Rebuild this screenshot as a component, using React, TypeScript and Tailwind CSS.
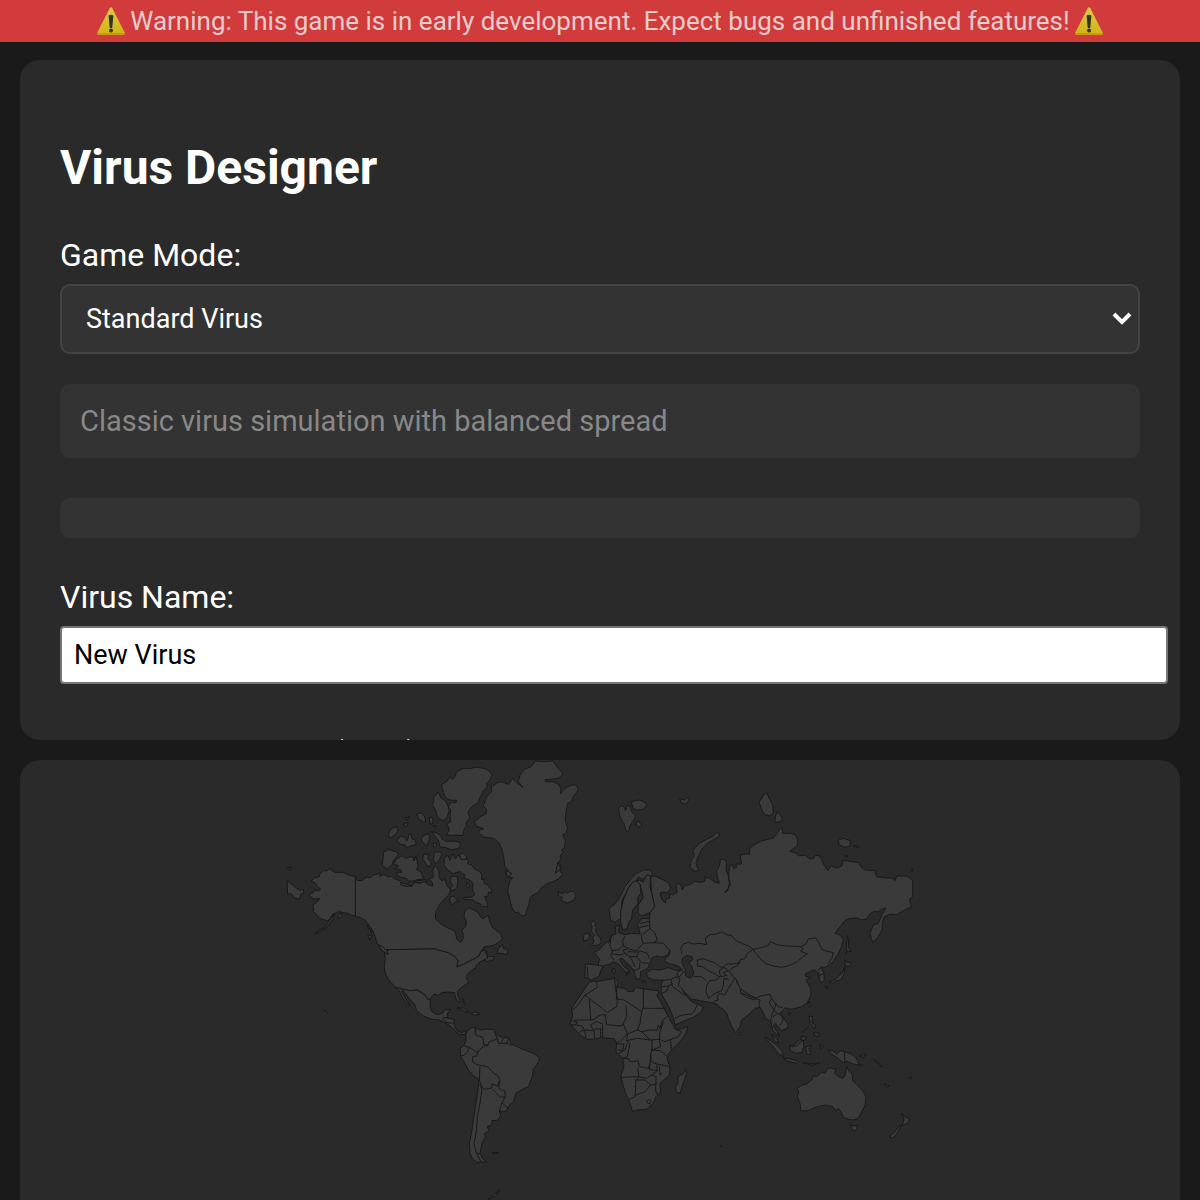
import { useState } from "react";

type Layer = { x: number; y: number; land: string[]; lines?: string[] };

/* Each layer covers one part of the world, drawn at three units per map unit. */
const layers: Layer[] = [
  {
    // Alaska, Canada and the Arctic islands
    x: 260,
    y: -5,
    land: [
      "M226,365 205,360 190,352 165,352 148,341 140,348 130,346 118,358 118,366 105,368 93,378 108,386 112,395 122,402 116,407 105,405 100,413 88,416 90,426 105,433 120,430 108,444 98,450 102,462 98,470 112,480 118,490 130,493 140,498 150,492 158,478 170,472 180,470 190,473 205,475 215,482 226,482Z",
      "M163,476 158,494 148,508 136,520 120,530 104,538 114,528 132,518 142,506 150,494Z",
      "M174,484 180,476 187,474 184,484 176,490Z",
      "M22,376 35,388 48,398 60,405 70,404 72,414 62,418 60,430 52,432 40,425 32,415 24,418Z",
      "M24,338 34,336 32,344 26,344Z",
      "M226,365 232,376 246,377 255,369 262,366 272,368 280,360 292,358 297,352 300,364 312,358 325,366 335,364 345,372 362,378 366,388 385,390 396,393 405,382 420,385 432,378 444,388 458,394 456,380 446,374 460,366 458,345 466,331 476,345 478,368 486,378 494,370 500,390 512,405 506,420 490,435 480,448 468,470 466,490 480,505 495,515 512,522 526,530 530,552 541,563 549,553 550,538 545,526 557,515 559,500 552,484 555,466 568,458 578,464 592,470 600,482 608,492 615,486 625,482 630,500 635,515 650,528 662,536 668,552 656,562 645,570 625,574 612,576 603,590 595,605 575,615 550,628 530,636 534,618 525,605 505,593 485,588 465,582 450,582 323,584 318,586 305,578 292,567 285,545 278,525 268,512 255,495 240,488 226,482",
      "M525,65 530,50 550,40 570,41 590,36 620,42 636,58 632,72 620,86 622,96 610,108 605,120 598,130 596,142 580,152 568,164 564,172 570,188 558,204 560,214 553,220 548,242 525,240 512,242 498,237 508,228 505,216 500,208 512,200 510,186 512,165 504,154 515,142 528,143 530,136 515,136 498,130 490,112 484,90 500,80 510,66 518,72Z",
      "M475,112 462,126 460,142 457,152 468,166 470,180 478,192 492,196 500,188 508,166 503,150 496,138 484,130Z",
      "M410,176 422,174 432,180 438,198 430,202 416,190Z",
      "M448,188 456,186 460,204 452,208Z",
      "M376,188 388,186 382,194Z M372,206 384,202 383,212 374,214Z M460,212 468,212 466,216Z",
      "M340,218 354,216 354,228 345,240 330,250 325,238 330,228Z",
      "M353,252 362,243 374,247 380,258 384,250 386,238 394,238 397,252 407,256 408,270 392,272 382,278 376,270 362,268 352,260Z",
      "M430,242 444,236 450,244 446,260 440,272 428,262 424,252Z",
      "M456,230 470,234 482,240 486,252 500,260 520,258 536,260 542,270 536,280 515,284 495,278 480,275 476,258 465,244Z M462,264 470,266 468,277 460,274Z",
      "M312,290 325,284 348,290 356,298 345,312 338,320 336,332 322,342 306,330 309,312Z",
      "M342,325 350,312 360,306 366,302 376,310 390,306 400,306 402,318 408,303 412,320 414,334 410,344 424,352 428,364 432,372 412,374 400,378 386,378 378,370 360,366 352,360 350,352 366,352 362,344 345,342 355,334Z",
      "M432,298 446,298 444,312 454,322 452,333 442,334 436,324 428,312Z",
      "M464,292 478,290 487,296 480,310 470,326 460,318 462,304Z",
      "M494,308 504,300 510,316 514,306 520,296 526,312 534,300 545,312 558,310 566,318 562,326 575,330 584,342 600,350 606,360 604,374 612,372 612,384 622,390 635,404 636,412 625,412 624,424 614,424 620,440 624,456 608,454 600,445 590,444 578,434 552,434 552,428 576,426 584,418 576,400 580,386 570,376 552,368 555,360 540,350 518,356 502,344 492,330Z",
      "M538,298 550,294 560,304 558,314 544,314Z",
      "M514,364 532,364 534,380 530,400 518,407 510,400 518,392 512,380Z",
      "M562,382 568,390 566,400 560,394Z M512,424 522,424 536,440 526,440 516,452 510,438Z",
      "M362,384 382,388 395,393 380,394 366,391Z M400,382 424,382 442,378 438,374 408,378Z",
      "M262,512 272,524 275,535 268,524Z M264,540 276,542 270,554Z M296,570 308,575 323,590 322,597 308,588Z",
      "M604,590 612,584 620,590 620,602 632,605 644,604 640,614 622,620 610,614 604,602Z M655,580 668,568 670,580 684,586 680,600 662,594 653,596Z",
    ],
    lines: ["M226,365 226,482"],
  },
  {
    // Greenland, Iceland, Svalbard and the British Isles
    x: 410,
    y: -5,
    land: [
      "M278,96 265,80 270,60 285,42 305,34 315,18 345,20 370,18 378,32 398,55 390,68 370,72 346,74 346,80 370,80 388,90 392,102 392,116 405,100 425,90 438,90 445,100 440,112 430,124 424,140 412,146 408,175 406,195 412,218 410,232 398,240 406,255 404,278 395,284 400,292 390,302 394,312 386,320 394,335 390,350 398,358 388,370 370,380 350,386 335,398 325,412 305,422 298,435 297,448 290,466 286,482 274,482 265,472 254,472 246,458 240,435 233,408 236,392 240,378 248,368 232,366 228,354 236,346 224,334 222,310 215,280 206,262 190,250 160,246 145,232 150,224 162,221 140,214 132,202 150,186 168,176 170,164 160,152 170,125 184,110 184,96 200,84 215,80 235,88 248,70 262,84Z",
      "M228,346 246,356 232,366Z M384,322 392,340 376,356 380,340Z",
      "M386,410 398,416 402,410 412,414 424,408 434,412 438,424 430,436 412,444 392,436 398,428 386,422Z",
      "M567,158 576,152 584,158 586,168 592,152 600,152 606,172 617,182 610,198 600,212 596,230 588,228 582,206 572,190 568,178Z",
      "M604,140 618,136 630,135 645,142 651,150 640,162 622,166 610,160Z M620,198 630,202 636,210 628,216 620,212Z",
      "M482,502 490,498 498,504 494,512 500,518 496,526 502,540 510,548 514,560 506,570 490,572 485,570 492,560 488,548 494,540 484,530 486,516Z",
      "M462,540 468,534 478,536 478,548 472,556 462,558Z",
    ],
  },
  {
    // Europe and Asia
    x: 540,
    y: 20,
    land: [
      "M272,290 285,288 310,300 325,308 333,324 322,338 308,336 300,340 306,360 316,369 318,358 330,354 328,342 340,345 352,336 348,316 356,310 366,320 366,330 376,316 392,313 405,303 415,307 435,304 436,290 450,296 468,308 478,310 472,290 470,272 478,258 482,237 496,240 500,250 498,270 506,290 511,315 495,338 503,332 508,310 506,290 508,262 516,252 522,266 530,262 528,252 545,252 541,226 555,222 568,222 570,204 580,196 600,184 625,178 640,174 655,154 663,142 668,150 668,160 690,160 705,164 714,180 712,196 700,206 690,214 710,220 715,228 735,225 748,236 760,237 765,226 780,228 786,240 792,255 803,272 812,258 830,264 845,258 850,240 870,244 895,248 905,262 915,270 945,272 950,290 975,294 995,294 1005,302 1010,288 1040,288 1058,300 1058,350 1048,358 1054,380 1030,392 1010,405 990,402 972,412 967,430 966,450 955,470 940,488 934,478 930,460 940,435 955,430 965,405 978,384 965,388 955,395 940,395 930,402 920,417 905,420 890,414 870,415 855,422 840,440 825,460 840,465 850,478 845,500 835,520 820,545 800,560 784,563 792,580 793,600 785,610 778,598 777,582 768,572 760,570 735,582 738,590 752,592 738,600 752,625 753,645 742,668 725,680 705,686 690,688 675,683 668,692 660,700 672,715 685,735 682,745 665,752 655,742 645,730 640,738 652,755 658,770 648,762 638,750 632,722 618,718 610,698 600,682 585,685 565,705 545,720 540,740 527,758 515,740 505,715 500,700 490,688 478,682 470,672 450,667 435,665 410,660 396,658 380,642 368,632 380,650 395,665 412,672 430,680 424,696 400,712 375,722 345,735 342,720 330,688 316,662 303,640 305,610 308,600 280,600 262,592 260,578 275,568 300,570 325,563 350,572 362,570 345,555 325,550 312,542 328,525 330,510 322,525 305,532 290,528 275,535 268,555 262,566 242,575 240,598 228,596 222,572 205,552 186,535 178,538 192,560 210,572 198,578 175,552 160,546 150,552 130,558 122,572 118,588 95,600 75,592 76,552 115,555 118,536 102,517 120,508 132,492 150,480 156,466 168,462 166,440 178,435 176,458 195,464 215,460 240,462 236,442 232,432 246,415 268,416 270,398 284,380 275,340 272,290",
      "M148,385 165,372 180,350 195,320 212,298 228,282 250,270 270,270 278,280 272,290 262,285 250,298 235,292 228,303 215,310 205,325 195,345 185,365 184,400 182,416 165,427 152,420Z",
      "M228,303 240,310 243,340 232,355 235,370 218,390 215,415 205,430 202,445 188,450 182,426 182,395 190,360 205,325 215,310Z",
      "M272,290 270,318 275,340 284,380 270,398 245,407 234,400 235,375 250,352 245,330 240,312 228,303 238,300 250,306 260,286Z",
      "M400,210 420,188 440,178 460,168 468,158 480,160 474,172 455,182 440,192 425,208 415,228 408,248 412,262 417,270 405,274 390,262 394,240 402,228Z",
      "M360,56 374,60 384,52 388,60 376,72 366,70Z",
      "M598,66 612,44 620,38 628,56 638,74 640,100 628,108 612,102 604,86Z M652,96 666,112 664,124 644,128 646,112Z",
      "M836,180 850,175 872,182 870,198 852,202 838,194Z M880,196 898,200 888,202Z M854,226 864,228 856,232Z M1052,268 1058,266 1056,274Z",
      "M862,468 866,480 865,500 874,516 862,512 858,520 860,490Z",
      "M854,540 860,546 876,548 868,560 858,558Z M854,562 852,584 842,600 828,602 818,610 806,606 826,598 836,588 844,582Z M796,618 804,620 802,626Z",
      "M198,580 206,578 200,586Z M158,566 166,568 164,582 158,578Z M245,604 258,604 256,608Z",
    ],
    lines: [
      "M365,520 362,505 370,492 385,487 400,492 420,490 440,494 436,474 450,464 470,462 486,455 498,464 514,466 528,482 545,490 565,498 578,508",
      "M578,508 595,505 622,498 632,485 650,494 680,498 722,500 730,506 722,514 742,522 728,530 712,545 690,556 665,562 640,558 620,552 600,535 588,520 578,508",
      "M722,500 738,492 745,476 768,474 778,490 785,508 802,514 820,518 815,535 805,550",
      "M578,508 562,520 555,535 540,540 535,555 515,565 508,575 520,590 530,600 532,612",
      "M540,548 520,552 500,552 490,562 478,560 465,548 445,542 430,536 412,540 412,558 428,560 445,572 465,582 478,590",
      "M478,590 470,600 448,602 440,618 438,636 446,655 465,640 485,632 490,615 492,595 505,598",
      "M478,572 492,562 505,572 490,578 500,586 484,590Z",
      "M402,590 425,590 438,602",
      "M526,594 514,612 505,625 495,645 478,640 472,652 474,660 460,665",
      "M530,600 540,625 560,640 580,650 590,655 600,648 618,645 630,642 634,655 628,668 642,690 636,702 632,722",
      "M540,628 542,638 570,650 588,655 585,660 560,652 542,640",
      "M588,656 600,660 596,675 600,682 M634,655 648,672 655,680 668,682 M648,672 642,690 650,700 664,705 670,720 660,735 M650,702 640,710",
      "M784,560 775,572 M790,582 780,585",
      "M268,425 240,430 M266,436 240,442 M268,416 270,445 285,458 292,482 280,488 250,490 245,478 244,462 M250,490 240,500 230,512 210,508 190,498 188,482 194,470 M280,488 310,490 328,510 M270,445 250,462",
      "M152,475 150,500 158,512 152,528 162,540 M158,522 180,525 195,520 188,510 200,508 M195,520 210,530 230,530 238,512 262,520 268,535 M205,515 232,516 M230,530 245,548 266,550 M210,530 218,545 225,560 M240,548 238,566 222,572 M155,466 145,490 M188,498 176,510 156,512 M194,548 204,560",
      "M82,560 84,592 M115,556 130,558 M345,555 360,562 372,578 M362,570 350,580 356,592 372,576",
      "M306,602 332,598 350,590 360,598 355,615 372,632 M332,598 338,620 350,628 372,645 M308,620 325,618 338,612 M306,640 320,634 325,618 M345,715 362,706 395,702 405,690 412,674",
    ],
  },
  {
    // United States, Mexico and South America
    x: 340,
    y: 170,
    land: [
      "M83,59 210,57 225,57 245,63 265,68 285,80 294,93 290,111 310,103 335,90 355,80 363,65 372,60 380,72 383,85 366,92 350,104 348,114 335,120 322,133 320,145 327,158 305,172 292,185 295,200 301,212 296,218 288,205 283,188 265,186 245,188 235,196 222,192 212,205 205,210 195,195 180,185 172,180 150,182 130,178 108,172 90,155 76,132 73,110 76,85 72,66 83,74Z",
      "M108,172 130,178 150,182 172,180 180,185 195,195 205,210 212,205 210,228 215,245 232,254 248,250 252,240 272,238 262,252 262,264 282,268 284,290 292,302 305,308 316,302 318,312 300,314 285,302 275,292 258,280 240,270 215,268 190,258 170,242 165,225 148,206 130,182 124,184 138,206 150,226 140,220 126,200 118,184Z",
      "M292,234 310,234 328,246 318,246 300,238Z M334,250 346,246 360,252 345,256Z M308,206 316,216 314,222Z",
      "M318,330 318,310 330,295 343,292 348,304 345,292 360,300 380,298 400,298 405,308 416,318 430,322 446,324 455,342 475,352 500,362 520,370 538,382 536,396 520,418 517,440 505,470 480,482 468,490 460,515 445,530 438,545 418,543 422,556 415,570 396,572 396,585 382,590 388,602 374,610 376,622 366,640 360,670 368,686 380,696 350,697 338,688 330,670 328,640 336,600 340,570 346,530 354,480 357,447 340,438 325,420 312,395 302,380 300,355 310,348Z",
      "M385,808 392,800 404,792 420,780 408,796Z M398,668 416,668 408,672Z",
    ],
    lines: [
      "M345,304 348,316 368,322 372,345 384,345 388,334 400,332 412,325 404,308 M412,325 416,342 424,338 430,325 M424,340 440,340 446,324 M440,340 455,345 M384,345 370,350 355,364 350,378 338,380 338,395 350,404 362,406 382,410 400,428 416,440 420,455 415,468 395,462 396,474 375,478 366,472 358,450 360,410",
      "M314,348 328,352 325,362 312,376 304,378 M328,352 350,366 355,364 M415,455 418,476 435,484 436,500 422,502 410,490 400,480 M436,500 426,518 444,534 M426,518 418,543 M360,465 366,480 360,520 352,560 350,600 342,640 348,668 360,672 M350,670 362,694 M253,262 262,264 M248,264 260,278 M258,278 284,280",
    ],
  },
  {
    // Africa
    x: 530,
    y: 140,
    land: [
      "M120,245 150,243 195,235 205,245 200,262 225,265 232,274 250,275 255,262 280,267 325,272 326,282 320,285 340,320 355,350 372,380 380,390 414,380 408,400 390,425 370,445 355,462 352,480 360,500 358,525 330,550 332,575 318,590 310,610 290,628 262,630 248,635 240,610 225,575 212,530 222,500 218,475 198,455 200,430 192,415 175,415 155,412 135,417 110,418 90,405 72,385 60,370 68,350 65,325 85,295 105,265Z",
      "M408,508 410,520 400,550 390,580 378,575 376,560 384,550 384,530 398,522Z",
      "M568,396 574,402 570,408 566,402Z",
    ],
    lines: [
      "M140,245 142,262 122,275 105,285 80,320 64,330 M105,285 172,338 200,320 202,298 196,262 194,238 M118,298 122,360 74,360 M122,360 132,358 150,345 168,345 M200,262 200,298 M202,298 222,300 275,335 280,322 280,267 M280,325 342,325 M275,335 270,370 262,390 232,402 M228,318 230,350 220,370 215,378 170,374 165,345 M220,372 232,402 215,420 200,430 M262,390 275,395 300,390 322,390 325,375 330,385 338,360 352,350 M340,365 330,395 328,418 300,420 275,395 M328,418 345,425 385,410 395,395 372,385 M362,420 364,450 M328,420 332,440 306,450 306,422 M232,405 230,422 262,415 300,420 M232,430 225,450 208,460 M200,432 222,432 218,452 205,450 M230,422 240,430 232,470 218,475 M222,475 236,476 240,485 264,482 268,500 295,505 300,490 302,465 306,450 M306,450 332,452 352,470 M302,465 304,485 320,492 360,500 M300,490 298,508 322,512 320,495 M264,505 266,530 212,532 M266,530 290,535 305,525 322,512 M266,532 258,540 255,590 238,598 M258,540 285,540 302,555 318,552 318,530 305,525 M302,555 285,575 258,585 M318,552 316,570 322,585 M328,500 330,525 336,520 M298,598 304,604 298,612 290,606Z M64,362 82,366 76,375 66,374 M76,375 96,378 104,392 M88,398 96,390 104,395 108,415 M104,390 132,392 134,415 M128,388 122,375 140,364 158,372 158,410 M152,388 152,412 M132,388 152,386",
    ],
  },
  {
    // South-east Asia and Oceania
    x: 700,
    y: 160,
    land: [
      "M232,505 245,496 260,492 275,480 280,468 290,470 305,456 315,460 322,446 332,444 348,448 344,460 356,470 370,475 376,462 380,440 388,455 396,462 398,482 412,495 428,512 438,530 436,555 425,575 415,595 400,600 385,598 370,592 362,575 355,565 348,572 338,560 318,555 290,560 265,572 243,573 240,550 232,530 236,518Z",
      "M392,614 402,618 412,614 410,628 402,634 396,626Z",
      "M545,580 554,590 570,598 560,612 546,616 552,600Z M544,616 536,632 524,650 512,656 510,648 524,636 536,620Z",
      "M136,352 150,360 170,375 186,392 190,410 176,402 158,378 145,364Z",
      "M190,414 210,416 235,424 230,430 205,424Z",
      "M210,376 224,374 240,358 250,364 252,380 245,398 226,400 212,392Z M244,350 258,350 254,362 244,360Z",
      "M258,380 276,376 266,386 274,402 262,404Z M250,428 280,432 300,428 278,436Z",
      "M268,288 278,290 276,308 288,316 284,326 272,312Z M282,338 298,340 296,350 284,346Z M300,374 310,378 304,386Z",
      "M325,390 338,392 350,402 362,392 390,400 408,412 414,428 424,436 400,432 382,424 370,428 350,412 336,404Z",
      "M268,246 272,256 268,262 264,254Z M206,278 214,280 208,286Z M156,344 172,356 176,370 166,366Z",
      "M420,408 436,402 432,412Z M460,418 484,434 486,440Z M494,492 508,498 500,502Z M566,474 576,470 572,478Z",
    ],
    lines: ["M374,398 374,428 M212,380 230,378 246,362 M248,336 264,322 M0,678 6,678"],
  },
];

function WorldMap() {
  return (
    <svg
      role="img"
      aria-label="World map"
      viewBox="0 0 1160 440"
      className="block w-full"
      strokeLinejoin="round"
      strokeLinecap="round"
      stroke="#191919"
    >
      {layers.map((layer, i) => (
        <g key={i} transform={`translate(${layer.x} ${layer.y}) scale(0.33333)`} strokeWidth={3}>
          {layer.land.map((d, j) => (
            <path key={j} d={d} fill="#3a3a3a" />
          ))}
          {layer.lines?.map((d, j) => (
            <path key={j} d={d} fill="none" />
          ))}
        </g>
      ))}
      {/* Caspian Sea */}
      <path
        transform="translate(540 20) scale(0.33333)"
        d="M368,535 380,526 396,530 398,540 386,548 396,560 402,582 392,595 378,588 376,568 366,550Z"
        fill="#2a2a2a"
        strokeWidth={3}
      />
      <path d="M304,250l4,3" fill="none" />
    </svg>
  );
}

function WarningSign() {
  return (
    <svg viewBox="0 0 30 30" className="size-[30px] shrink-0" aria-hidden="true">
      <defs>
        <linearGradient id="sign" x1="0" y1="0" x2="0" y2="1">
          <stop offset="0" stopColor="#d9cc4a" />
          <stop offset="1" stopColor="#d3b312" />
        </linearGradient>
      </defs>
      <path d="M13.7 2.2q1.3-1.8 2.6 0L28.8 26.800q.6 2-1.200 2H2.400q-1.800 0-1.200-2Z" fill="url(#sign)" />
      <path d="M1.500 27.500h27" stroke="#bd9a20" strokeWidth="1" />
      <path d="M12.600 9.500q2.400-1.400 4.800 0L16.300 21.500q-1.300 1-2.600 0Z" fill="#33331f" />
      <circle cx="15" cy="24.600" r="2" fill="#33331f" />
    </svg>
  );
}

export default function App() {
  const [name, setName] = useState("New Virus");
  return (
    <div className="flex h-screen flex-col overflow-hidden bg-[#1a1a1a] font-['Roboto',sans-serif] text-white">
      <div
        role="alert"
        className="flex h-[42px] shrink-0 items-center justify-center gap-1 bg-[#d13b3b] text-[26px] leading-[30px] text-[#e6cccc]"
      >
        <WarningSign />
        <span>Warning: This game is in early development. Expect bugs and unfinished features!</span>
        <WarningSign />
      </div>
      <main className="flex min-h-0 flex-1 flex-col gap-5 px-5 pt-[18px]">
        <section className="max-h-[680px] shrink-0 overflow-y-auto rounded-[20px] bg-[#2a2a2a] px-10 pt-20 [scrollbar-width:none]">
          <h1 className="text-[48px] leading-[56px] font-bold">Virus Designer</h1>
          <label htmlFor="mode" className="mt-10 block text-[32px] leading-[38px]">
            Game Mode:
          </label>
          <div className="relative mt-[10px]">
            <select
              id="mode"
              className="block h-[70px] w-full appearance-none rounded-[10px] border-2 border-[#444] bg-[#333] px-6 text-[27px]"
            >
              <option>Standard Virus</option>
            </select>
            <svg
              viewBox="0 0 20 14"
              className="pointer-events-none absolute top-7 right-2 h-[14px] w-5"
              fill="none"
              stroke="#fff"
              strokeWidth="4"
              aria-hidden="true"
            >
              <path d="M2 2l8 8l8-8" />
            </svg>
          </div>
          <p className="mt-[30px] rounded-[10px] bg-[#333] p-5 text-[29px] leading-[34px] text-[#888]">
            Classic virus simulation with balanced spread
          </p>
          <div className="mt-10 h-10 rounded-[10px] bg-[#333]" />
          <label htmlFor="name" className="mt-10 block text-[32px] leading-[38px]">
            Virus Name:
          </label>
          <input
            id="name"
            value={name}
            onChange={(e) => setName(e.target.value)}
            className="mt-[10px] box-content block h-[54px] w-full rounded-[4px] border-2 border-[#767676] bg-white px-3 text-[27px] text-black"
          />
          <label htmlFor="rate" className="mt-[50px] block text-[32px] leading-[38px]">
            Transmission Rate (1-10):
          </label>
          <input id="rate" type="range" min={1} max={10} className="block w-full" />
        </section>
        <section className="min-h-0 flex-1 overflow-hidden rounded-t-[20px] bg-[#2a2a2a]">
          <WorldMap />
        </section>
      </main>
    </div>
  );
}
